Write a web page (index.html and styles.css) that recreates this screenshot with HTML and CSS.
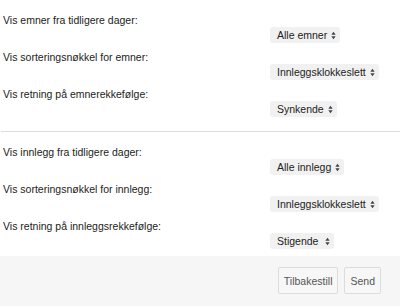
FILE: index.html
```html
<!DOCTYPE html>
<html lang="no">
<head>
    <meta charset="UTF-8">
    <title>Visningsvalg</title>
    <link rel="stylesheet" href="styles.css">
</head>
<body>
    <form class="prefs">
        <div class="group">
            <div class="row">
                <div class="label">Vis emner fra tidligere dager:</div>
                <div class="field"><span class="pick">Alle emner <svg class="arrows" viewBox="0 0 6 10"><path d="M3 0.5 L5.6 4 L0.4 4 Z M3 9.5 L5.6 6 L0.4 6 Z"/></svg></span></div>
            </div>
            <div class="row">
                <div class="label">Vis sorteringsnøkkel for emner:</div>
                <div class="field"><span class="pick">Innleggsklokkeslett <svg class="arrows" viewBox="0 0 6 10"><path d="M3 0.5 L5.6 4 L0.4 4 Z M3 9.5 L5.6 6 L0.4 6 Z"/></svg></span></div>
            </div>
            <div class="row">
                <div class="label">Vis retning på emnerekkefølge:</div>
                <div class="field"><span class="pick pick-dir">Synkende <svg class="arrows" viewBox="0 0 6 10"><path d="M3 0.5 L5.6 4 L0.4 4 Z M3 9.5 L5.6 6 L0.4 6 Z"/></svg></span></div>
            </div>
        </div>

        <hr class="divider">

        <div class="group">
            <div class="row">
                <div class="label">Vis innlegg fra tidligere dager:</div>
                <div class="field"><span class="pick">Alle innlegg <svg class="arrows" viewBox="0 0 6 10"><path d="M3 0.5 L5.6 4 L0.4 4 Z M3 9.5 L5.6 6 L0.4 6 Z"/></svg></span></div>
            </div>
            <div class="row">
                <div class="label">Vis sorteringsnøkkel for innlegg:</div>
                <div class="field"><span class="pick">Innleggsklokkeslett <svg class="arrows" viewBox="0 0 6 10"><path d="M3 0.5 L5.6 4 L0.4 4 Z M3 9.5 L5.6 6 L0.4 6 Z"/></svg></span></div>
            </div>
            <div class="row">
                <div class="label">Vis retning på innleggsrekkefølge:</div>
                <div class="field"><span class="pick pick-dir">Stigende <svg class="arrows" viewBox="0 0 6 10"><path d="M3 0.5 L5.6 4 L0.4 4 Z M3 9.5 L5.6 6 L0.4 6 Z"/></svg></span></div>
            </div>
        </div>

        <div class="actions">
            <button type="reset" class="btn">Tilbakestill</button>
            <button type="submit" class="btn">Send</button>
        </div>
    </form>
</body>
</html>
```

FILE: styles.css
```css
* {
    margin: 0;
    padding: 0;
    box-sizing: border-box;
    font-family: 'Liberation Sans', Arial, sans-serif;
}

body {
    background: #fff;
    color: #222;
    font-size: 10.5px;
}

.group {
    padding-top: 13px;
}

.row {
    padding-bottom: 7px;
}

.label {
    line-height: 14px;
    padding-left: 3px;
    color: #222;
}

.field {
    padding-left: 270px;
    height: 16px;
}

.pick {
    display: inline-flex;
    align-items: center;
    justify-content: space-between;
    gap: 4px;
    height: 16px;
    padding: 0 4px 0 7px;
    background: #f1f1f1;
    border-radius: 3px;
    color: #222;
    font-size: 10.5px;
    white-space: nowrap;
}

.pick-dir {
    min-width: 64px;
}

.arrows {
    flex-shrink: 0;
    width: 5px;
    height: 9px;
    fill: #444;
}

.divider {
    border: 0;
    border-top: 1px solid #ddd;
    margin: 7px 0 0 1px;
}

.actions {
    background: #f6f6f6;
    height: 52px;
    display: flex;
    justify-content: flex-end;
    align-items: flex-start;
    gap: 6px;
    padding: 11px 19px 0 0;
}

.btn {
    height: 27px;
    padding: 0 5px;
    background: #f7f7f7;
    border: 1px solid #dcdcdc;
    border-radius: 2px;
    color: #555;
    font-size: 10.5px;
}
```
